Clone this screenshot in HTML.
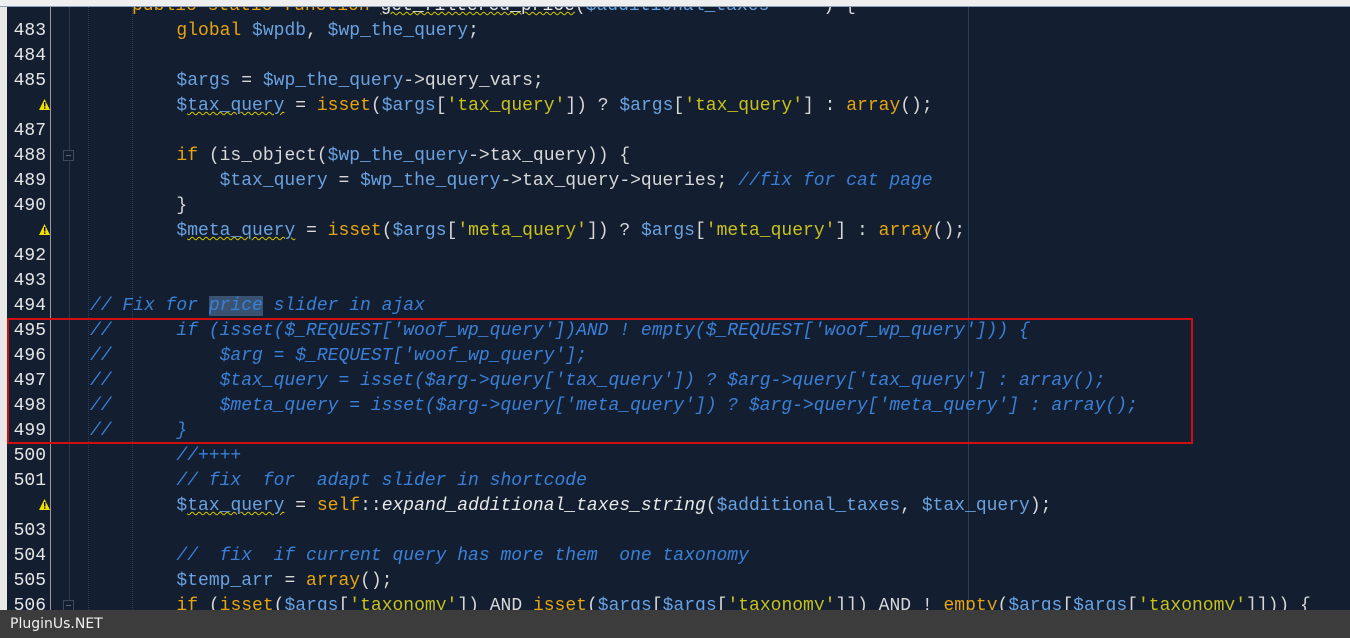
<!DOCTYPE html>
<html><head><meta charset="utf-8"><style>
html,body{margin:0;padding:0;width:1350px;height:638px;overflow:hidden;background:#131e31;}
#top{position:absolute;left:0;top:0;width:1350px;height:6px;background:#efefef;border-bottom:1px solid #8aa0b8;z-index:3}
#lb{position:absolute;left:0;top:0;width:7px;height:638px;background:#e8e8e8;z-index:2}
#gl{position:absolute;left:50px;top:0;width:1px;height:638px;background:#9a9a9a}
#fold{position:absolute;left:69px;top:0;width:1px;height:610px;background:#2c3a50}
.g1{position:absolute;left:88px;top:0;width:0;height:610px;border-left:1px dotted #2f3d55}
.g2{position:absolute;left:132px;top:0;width:0;height:610px;border-left:1px dotted #2f3d55}
#vr{position:absolute;left:968px;top:0;width:1px;height:610px;background:#2c3f5c}
.ln{position:absolute;left:0;width:46px;text-align:right;color:#e6e6e6;font:18px "Liberation Mono",monospace;height:25px;line-height:25px;margin-top:2px}
.c{position:absolute;left:90px;white-space:pre;font:18px "Liberation Mono",monospace;height:25px;line-height:25px;color:#d8d8d8;margin-top:2px}
.v{color:#6aa2e0}.k{color:#e6a50f}.s{color:#c9c21a}.cm{color:#3b80d6;font-style:italic}.w{color:#e8e8e8}.i{font-style:italic;color:#e8e8e8}
.u{text-decoration:underline wavy #d6c800;text-decoration-thickness:1px}
.warn{position:absolute;left:39px;width:11px;height:11px;margin-top:1px}
.fb{position:absolute;left:63px;width:11px;height:11px;border:1px solid #3c4a60;box-sizing:border-box;background:#131e31;margin-top:2px}
.fb:after{content:"";position:absolute;left:2px;top:4px;width:5px;height:1px;background:#5c6a80}
#red{position:absolute;left:7px;top:318px;width:1186px;height:126px;border:2px solid #d01010;box-sizing:border-box;z-index:2}
#ft{position:absolute;left:0;top:610px;width:1350px;height:28px;background:#3c3c3c;color:#f0f0f0;font:14px "DejaVu Sans",sans-serif;line-height:28px;padding-left:10px;z-index:4}
.hl{background:#3a5272}
</style></head><body>
<div id="top"></div><div id="lb"></div><div id="gl"></div><div id="fold"></div><div class="g1"></div><div class="g2"></div><div id="vr"></div>
<div class="c" style="top:-8px;left:132px"><span class="k">public static function</span> <span class="w u">get_filtered_price</span>(<span class="v">$additional_taxes</span> = <span class="s">""</span>) {</div>
<div class="ln" style="top:17px">483</div><div class="c" style="top:17px">        <span class="k">global</span> <span class="v">$wpdb</span>, <span class="v">$wp_the_query</span>;</div>
<div class="ln" style="top:42px">484</div>
<div class="ln" style="top:67px">485</div><div class="c" style="top:67px">        <span class="v">$args</span> = <span class="v">$wp_the_query</span>-&gt;query_vars;</div>
<svg class="warn" style="top:98px" viewBox="0 0 11 11"><path d="M5.5 0L11 11H0Z" fill="#f0e000"/><rect x="5" y="3" width="1.4" height="4.5" fill="#000"/><rect x="5" y="8.4" width="1.4" height="1.4" fill="#000"/></svg>
<div class="c" style="top:92px">        <span class="v">$<span class="u">tax_query</span></span> = <span class="k">isset</span>(<span class="v">$args</span>[<span class="s">'tax_query'</span>]) ? <span class="v">$args</span>[<span class="s">'tax_query'</span>] : <span class="k">array</span>();</div>
<div class="ln" style="top:117px">487</div>
<div class="ln" style="top:142px">488</div><div class="fb" style="top:148px"></div><div class="c" style="top:142px">        <span class="k">if</span> (is_object(<span class="v">$wp_the_query</span>-&gt;tax_query)) {</div>
<div class="ln" style="top:167px">489</div><div class="c" style="top:167px">            <span class="v">$tax_query</span> = <span class="v">$wp_the_query</span>-&gt;tax_query-&gt;queries; <span class="cm">//fix for cat page</span></div>
<div class="ln" style="top:192px">490</div><div class="c" style="top:192px">        }</div>
<svg class="warn" style="top:223px" viewBox="0 0 11 11"><path d="M5.5 0L11 11H0Z" fill="#f0e000"/><rect x="5" y="3" width="1.4" height="4.5" fill="#000"/><rect x="5" y="8.4" width="1.4" height="1.4" fill="#000"/></svg>
<div class="c" style="top:217px">        <span class="v">$<span class="u">meta_query</span></span> = <span class="k">isset</span>(<span class="v">$args</span>[<span class="s">'meta_query'</span>]) ? <span class="v">$args</span>[<span class="s">'meta_query'</span>] : <span class="k">array</span>();</div>
<div class="ln" style="top:242px">492</div>
<div class="ln" style="top:267px">493</div>
<div class="ln" style="top:292px">494</div><div class="c cm" style="top:292px">// Fix for <span class="hl">price</span> slider in ajax</div>
<div class="ln" style="top:317px">495</div><div class="c cm" style="top:317px">//      if (isset($_REQUEST['woof_wp_query'])AND ! empty($_REQUEST['woof_wp_query'])) {</div>
<div class="ln" style="top:342px">496</div><div class="c cm" style="top:342px">//          $arg = $_REQUEST['woof_wp_query'];</div>
<div class="ln" style="top:367px">497</div><div class="c cm" style="top:367px">//          $tax_query = isset($arg-&gt;query['tax_query']) ? $arg-&gt;query['tax_query'] : array();</div>
<div class="ln" style="top:392px">498</div><div class="c cm" style="top:392px">//          $meta_query = isset($arg-&gt;query['meta_query']) ? $arg-&gt;query['meta_query'] : array();</div>
<div class="ln" style="top:417px">499</div><div class="c cm" style="top:417px">//      }</div>
<div id="red"></div>
<div class="ln" style="top:442px">500</div><div class="c cm" style="top:442px">        //++++</div>
<div class="ln" style="top:467px">501</div><div class="c cm" style="top:467px">        // fix  for  adapt slider in shortcode</div>
<svg class="warn" style="top:498px" viewBox="0 0 11 11"><path d="M5.5 0L11 11H0Z" fill="#f0e000"/><rect x="5" y="3" width="1.4" height="4.5" fill="#000"/><rect x="5" y="8.4" width="1.4" height="1.4" fill="#000"/></svg>
<div class="c" style="top:492px">        <span class="v">$<span class="u">tax_query</span></span> = <span class="k">self</span>::<span class="i">expand_additional_taxes_string</span>(<span class="v">$additional_taxes</span>, <span class="v">$tax_query</span>);</div>
<div class="ln" style="top:517px">503</div>
<div class="ln" style="top:542px">504</div><div class="c cm" style="top:542px">        //  fix  if current query has more them  one taxonomy</div>
<div class="ln" style="top:567px">505</div><div class="c" style="top:567px">        <span class="v">$temp_arr</span> = <span class="k">array</span>();</div>
<div class="ln" style="top:592px">506</div><div class="fb" style="top:598px"></div><div class="c" style="top:592px">        <span class="k">if</span> (<span class="k">isset</span>(<span class="v">$args</span>[<span class="s">'taxonomy'</span>]) AND <span class="k">isset</span>(<span class="v">$args</span>[<span class="v">$args</span>[<span class="s">'taxonomy'</span>]]) AND ! <span class="k u">empty</span>(<span class="v">$args</span>[<span class="v">$args</span>[<span class="s">'taxonomy'</span>]])) {</div>
<div id="ft">PluginUs.NET</div>
</body></html>
